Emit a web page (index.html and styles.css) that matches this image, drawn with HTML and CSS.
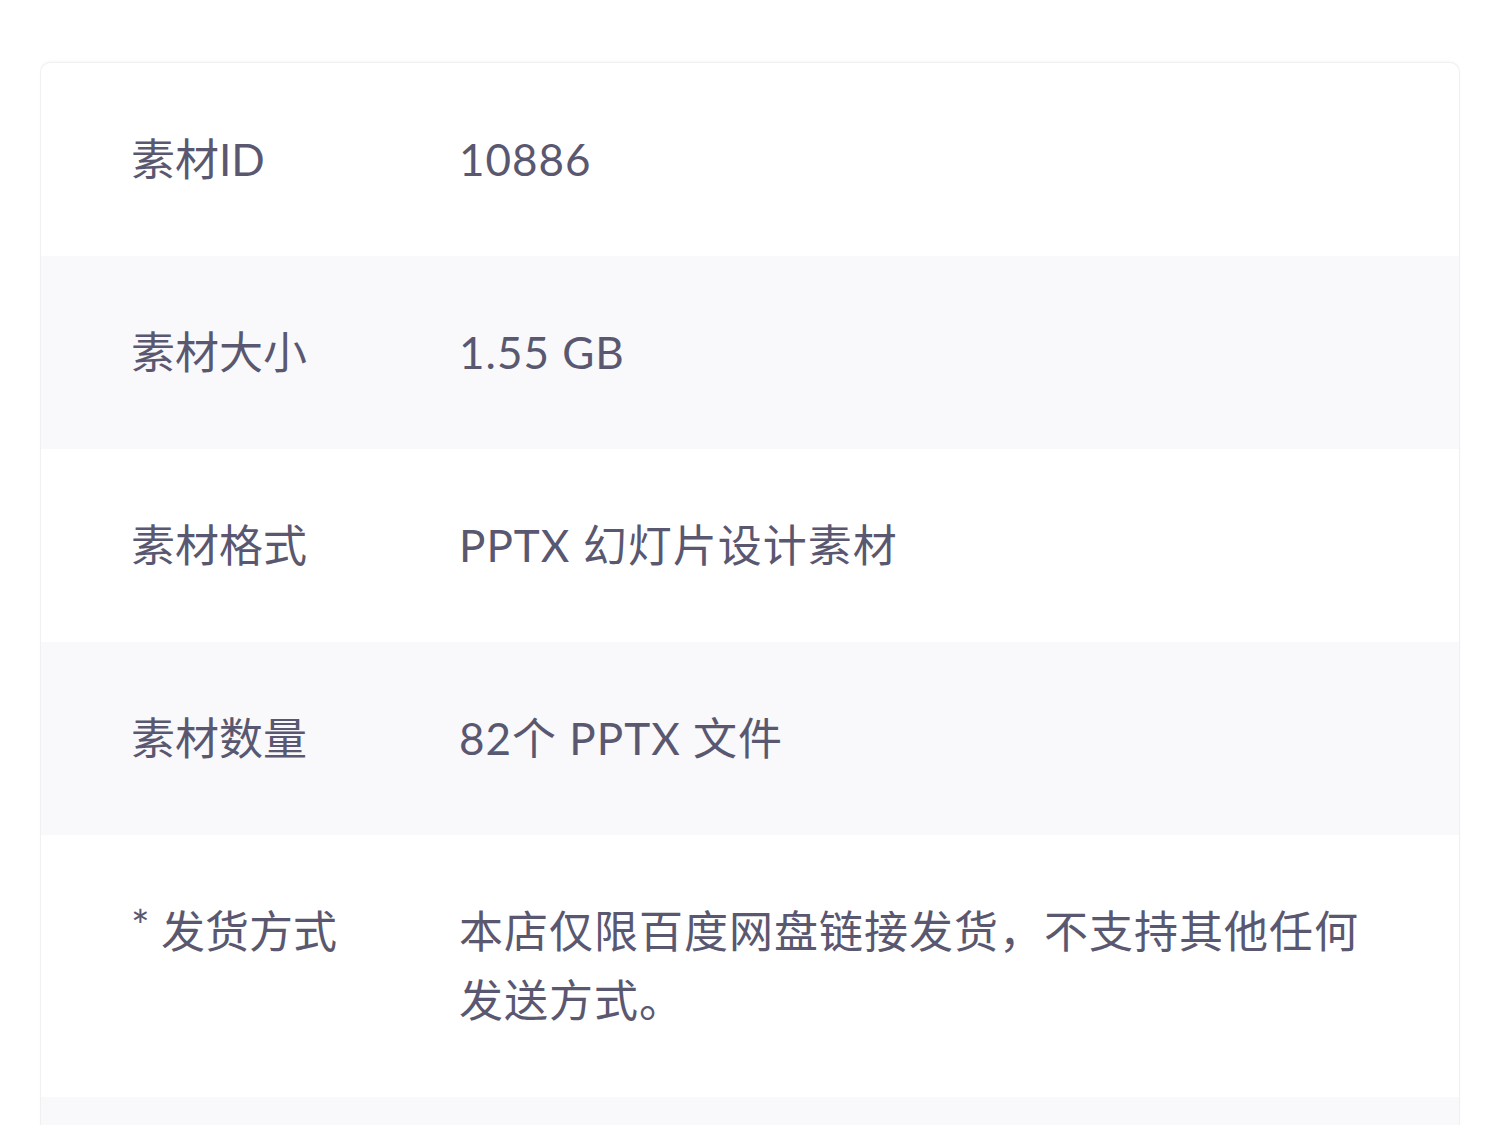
FILE: index.html
```html
<!DOCTYPE html>
<html lang="zh-CN">
<head>
    <meta charset="UTF-8">
    <meta name="viewport" content="width=device-width, initial-scale=1.0">
    <title>素材信息</title>
    <link rel="stylesheet" href="styles.css">
</head>
<body>
    <div class="page">
        <div class="info-card">
            <div class="info-row">
                <div class="info-label">素材ID</div>
                <div class="info-value">10886</div>
            </div>
            <div class="info-row">
                <div class="info-label">素材大小</div>
                <div class="info-value">1.55 GB</div>
            </div>
            <div class="info-row">
                <div class="info-label">素材格式</div>
                <div class="info-value">PPTX 幻灯片设计素材</div>
            </div>
            <div class="info-row">
                <div class="info-label">素材数量</div>
                <div class="info-value">82个 PPTX 文件</div>
            </div>
            <div class="info-row">
                <div class="info-label"><span class="required">*</span> 发货方式</div>
                <div class="info-value">本店仅限百度网盘链接发货，不支持其他任何发送方式。</div>
            </div>
            <div class="info-row">
                <div class="info-label"></div>
                <div class="info-value"></div>
            </div>
        </div>
    </div>
</body>
</html>
```

FILE: styles.css
```css
body {
    margin: 0;
    padding: 0;
    background-color: #ffffff;
    font-family: 'Lato', 'Noto Sans CJK SC', sans-serif;
    color: #5a5870;
    overflow: hidden;
}

.page {
    padding: 62px 40px 0 40px;
}

/* Card with alternating rows */
.info-card {
    border: 1px solid #f0f0f3;
    border-bottom: none;
    border-radius: 10px 10px 0 0;
    overflow: hidden;
    box-shadow: 0 -1px 2px rgba(0, 0, 0, 0.03);
}

.info-row {
    display: grid;
    grid-template-columns: 328px 1fr;
    align-items: start;
    padding: 62px 80px 62px 90px;
    min-height: 69px;
    font-size: 44px;
    line-height: 69px;
}

.info-row:nth-child(even) {
    background-color: #f9f9fb;
}

.info-label {
    letter-spacing: 0;
}

.required {
    position: relative;
    top: -6px;
}

.info-value {
    letter-spacing: 1px;
}
```
